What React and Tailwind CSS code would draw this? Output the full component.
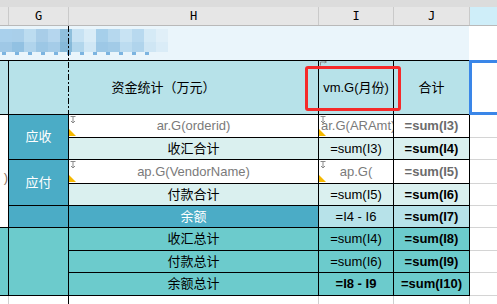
const mosaicTop = [
  "#a9d0ec", "#a9cfea", "#bcdcf0", "#a8cde8", "#b5d6ee", "#8fbfdc", "#c7e2f3",
  "#d9ecf7", "#a6cfea", "#b6d8ee", "#c8e3f3", "#b8d9ef", "#d5eaf6", "#e0eff8",
];
const mosaicBottom = [
  "#9fc8e6", "#92c1e2", "#b0d4ec", "#9cc7e5", "#a5cce8", "#86b9d9", "#b2d6ec",
  "#d0e7f5", "#9dc8e6", "#a2cbe7", "#bcdcf0", "#b0d4ec", "#cfe6f4", "#daecf7",
];

const Arrow = () => (
  <svg className="absolute left-[1px] top-[1px]" width="6" height="8" viewBox="0 0 6 8">
    <path d="M0.5 0.5H5.5M3 0.5V7M1 5L3 7L5 5" stroke="#8a8a8a" strokeWidth="1" fill="none" />
  </svg>
);

const Flag = () => (
  <svg className="absolute left-0 bottom-[1px]" width="7" height="7" viewBox="0 0 7 7">
    <polygon points="0,0 0,7 7,7" fill="#f5b800" />
  </svg>
);

const Cell = ({ className = "", children }) => (
  <div className={`relative flex items-center justify-center overflow-hidden whitespace-nowrap border-r border-b border-black text-[13px] ${className}`}>
    {children}
  </div>
);

export default function App() {
  return (
    <div className="relative w-[497px] h-[304px] overflow-hidden bg-white font-['Liberation_Sans','Noto_Sans_CJK_SC',sans-serif] text-black">
      {/* top strip */}
      <div className="h-[7px] bg-[#dcdcdc]" />

      {/* column letters */}
      <div className="flex h-[19px] border-b border-[#b9b9b9] font-['DejaVu_Sans_Mono',monospace] text-[12px] text-black">
        <div className="w-[9px] bg-[#e6e6e6] border-r border-[#cacaca]" />
        <div className="w-[60px] bg-[#e6e6e6] border-r border-[#cacaca] flex items-center justify-center">G</div>
        <div className="w-[250px] bg-[#e6e6e6] border-r border-[#cacaca] flex items-center justify-center">H</div>
        <div className="w-[75px] bg-[#e6e6e6] border-r border-[#cacaca] flex items-center justify-center">I</div>
        <div className="w-[76px] bg-[#e6e6e6] border-r border-[#cacaca] flex items-center justify-center">J</div>
        <div className="flex-1 bg-[#cfeef9]" />
      </div>

      {/* title row (blurred) */}
      <div className="flex h-[35px]">
        <div className="w-[469px] bg-[#eaf5fb] border-b border-black flex flex-col pt-[3px]">
          <div className="flex h-[13px]">
            {mosaicTop.map((c, i) => (
              <div key={i} className="w-[12px]" style={{ background: c }} />
            ))}
          </div>
          <div className="flex h-[10px]">
            {mosaicBottom.map((c, i) => (
              <div key={i} className="w-[12px]" style={{ background: c }} />
            ))}
          </div>
          <div className="flex h-[4px] w-[168px] gap-[9px] pl-[2px]">
            {mosaicTop.slice(0, 12).map((_, i) => (
              <div key={i} className="w-[4px] h-[3px] bg-[#4d98d4] opacity-70" />
            ))}
          </div>
        </div>
        <div className="flex-1" />
      </div>

      {/* sheet body */}
      <div className="grid grid-cols-[9px_60px_250px_75px_76px_1fr] grid-rows-[54px_23px_22px_24px_22px_22px_23px_22px_23px]">
        {/* header row */}
        <Cell className="bg-[#b7e2e9]" />
        <Cell className="col-span-2 bg-[#b7e2e9]">资金统计（万元）</Cell>
        <Cell className="bg-[#b7e2e9]">
          <svg className="absolute left-[1px] top-0" width="7" height="5" viewBox="0 0 7 5">
            <path d="M0.5 4.5V1H6M4.5 0L6.5 1L4.5 2" stroke="#8a8a8a" strokeWidth="1" fill="none" />
          </svg>
          vm.G(月份)
        </Cell>
        <Cell className="bg-[#b7e2e9]">合计</Cell>
        <div className="bg-white" />

        {/* left overflow column */}
        <div className="row-span-5 border-r border-b border-black bg-white flex justify-end pt-[55px] text-[13px] text-[#8a7060] leading-4">)</div>

        <Cell className="row-span-2 bg-[#4bacc6] text-white">应收</Cell>
        <Cell className="bg-white text-[#7a7a7a]">
          <Arrow />
          <Flag />
          ar.G(orderid)
        </Cell>
        <Cell className="bg-white text-[#7a7a7a] justify-start pl-[2px]">
          <Arrow />
          <Flag />
          ar.G(ARAmt)
        </Cell>
        <Cell className="bg-white text-[#6b6b6b] font-bold">=sum(I3)</Cell>
        <div className="border-b border-[#d4d4d4]" />

        <Cell className="bg-[#daf0ef]">收汇合计</Cell>
        <Cell className="bg-[#daf0ef]">=sum(I3)</Cell>
        <Cell className="bg-[#daf0ef] font-bold">=sum(I4)</Cell>
        <div className="border-b border-[#d4d4d4]" />

        <Cell className="row-span-2 bg-[#4bacc6] text-white">应付</Cell>
        <Cell className="bg-white text-[#7a7a7a] justify-center">
          <Arrow />
          <Flag />
          <span className="w-[116px] shrink-0 text-center">ap.G(VendorName)</span>
        </Cell>
        <Cell className="bg-white text-[#7a7a7a]">
          <Arrow />
          <Flag />
          ap.G(
        </Cell>
        <Cell className="bg-white text-[#6b6b6b] font-bold">=sum(I5)</Cell>
        <div className="border-b border-[#d4d4d4]" />

        <Cell className="bg-[#daf0ef]">付款合计</Cell>
        <Cell className="bg-[#daf0ef]">=sum(I5)</Cell>
        <Cell className="bg-[#daf0ef] font-bold">=sum(I6)</Cell>
        <div className="border-b border-[#d4d4d4]" />

        <Cell className="bg-[#4bacc6]" />
        <Cell className="bg-[#4bacc6] text-white">余额</Cell>
        <Cell className="bg-[#b7e2e9]">=I4 - I6</Cell>
        <Cell className="bg-[#b7e2e9] font-bold">=sum(I7)</Cell>
        <div className="border-b border-[#d4d4d4]" />

        <Cell className="row-span-3 bg-[#6ccbcc]" />
        <Cell className="row-span-3 bg-[#6ccbcc]" />
        <Cell className="bg-[#6ccbcc]">收汇总计</Cell>
        <Cell className="bg-[#6ccbcc]">=sum(I4)</Cell>
        <Cell className="bg-[#6ccbcc] font-bold">=sum(I8)</Cell>
        <div className="border-b border-[#d4d4d4]" />

        <Cell className="bg-[#6ccbcc]">付款总计</Cell>
        <Cell className="bg-[#6ccbcc]">=sum(I6)</Cell>
        <Cell className="bg-[#6ccbcc] font-bold">=sum(I9)</Cell>
        <div className="border-b border-[#d4d4d4]" />

        <Cell className="bg-[#6ccbcc]">余额总计</Cell>
        <Cell className="bg-[#6ccbcc] font-bold">=I8 - I9</Cell>
        <Cell className="bg-[#6ccbcc] font-bold">=sum(I10)</Cell>
        <div className="border-b border-[#d4d4d4]" />
      </div>

      {/* empty rows below */}
      <div className="flex h-[9px]">
        <div className="w-[9px] border-r border-[#cfcfcf]" />
        <div className="w-[60px] border-r border-black" />
        <div className="w-[250px] border-r border-[#cfcfcf]" />
        <div className="w-[75px] border-r border-[#cfcfcf]" />
        <div className="w-[76px] border-r border-[#cfcfcf]" />
        <div className="flex-1" />
      </div>

      {/* page break line */}
      <svg className="absolute left-[68px] top-[26px]" width="1" height="88" viewBox="0 0 1 88">
        <line x1="0.5" y1="0" x2="0.5" y2="88" stroke="#000" strokeWidth="1" strokeDasharray="6 2 2 2" />
      </svg>

      {/* red highlight */}
      <div className="absolute left-[305px] top-[66px] w-[96px] h-[45px] border-[3px] border-[#f52a2a] rounded-[3px]" />

      {/* selected cell */}
      <div className="absolute left-[469px] top-[60px] w-[40px] h-[55px] border-[3px] border-[#3a86e8]" />
    </div>
  );
}
